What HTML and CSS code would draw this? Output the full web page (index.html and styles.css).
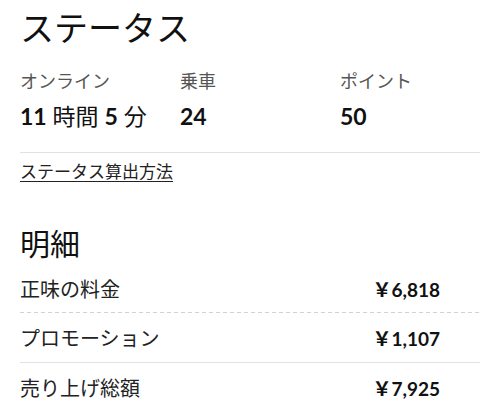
FILE: index.html
```html
<!DOCTYPE html>
<html lang="ja">
<head>
  <meta charset="UTF-8">
  <title>ステータス</title>
  <meta name="viewport" content="width=device-width, initial-scale=1.0">
  <link rel="stylesheet" href="styles.css">
</head>
<body>

<div class="page">
  <h1 class="title">ステータス</h1>

  <div class="stats">
    <div class="stat">
      <div class="stat-label">オンライン</div>
      <div class="stat-value"><span class="num">11</span> 時間 <span class="num">5</span> 分</div>
    </div>
    <div class="stat">
      <div class="stat-label">乗車</div>
      <div class="stat-value"><span class="num">24</span></div>
    </div>
    <div class="stat">
      <div class="stat-label">ポイント</div>
      <div class="stat-value"><span class="num">50</span></div>
    </div>
  </div>

  <div class="divider"></div>

  <a class="help-link" href="#">ステータス算出方法</a>

  <h2 class="section-title">明細</h2>

  <div class="breakdown">
    <div class="row dashed">
      <span class="row-label">正味の料金</span>
      <span class="row-amount">￥6,818</span>
    </div>
    <div class="row solid">
      <span class="row-label">プロモーション</span>
      <span class="row-amount">￥1,107</span>
    </div>
    <div class="row">
      <span class="row-label">売り上げ総額</span>
      <span class="row-amount">￥7,925</span>
    </div>
  </div>
</div>

</body>
</html>
```

FILE: styles.css
```css
body {
  margin: 0;
  font-family: Lato, "Noto Sans CJK JP", sans-serif;
  background-color: #fff;
  color: #111;
}

.page {
  padding: 0 20px;
}

.title {
  margin: 0;
  padding-top: 8px;
  font-size: 34px;
  line-height: 40px;
  font-weight: 400;
  color: #111;
}

.stats {
  display: grid;
  grid-template-columns: 160px 160px 1fr;
  margin-top: 21px;
}

.stat-label {
  font-size: 18px;
  line-height: 24px;
  color: #555;
}

.stat-value {
  margin-top: 8px;
  font-size: 23px;
  line-height: 30px;
  font-weight: 400;
  color: #111;
}

.stat-value .num {
  font-weight: 700;
}

.divider {
  margin-top: 21px;
  height: 1px;
  background: #e2e2e2;
}

.help-link {
  display: inline-block;
  margin-top: 7px;
  font-size: 17px;
  line-height: 24px;
  color: #222;
  text-decoration: underline;
  text-underline-offset: 3px;
}

.section-title {
  margin: 39px 0 0;
  font-size: 30px;
  line-height: 40px;
  font-weight: 400;
  color: #111;
}

.breakdown {
  margin-top: 1px;
}

.row {
  display: flex;
  justify-content: space-between;
  align-items: center;
  height: 49px;
  padding-right: 40px;
}

.row.dashed {
  background: repeating-linear-gradient(90deg, #d2d2d2 0 4px, transparent 4px 7px) bottom / 100% 1px no-repeat;
}

.row.solid {
  border-bottom: 1px solid #e2e2e2;
}

.row-label {
  font-size: 20px;
  color: #222;
}

.row-amount {
  font-size: 19px;
  font-weight: 700;
  color: #111;
}
```
